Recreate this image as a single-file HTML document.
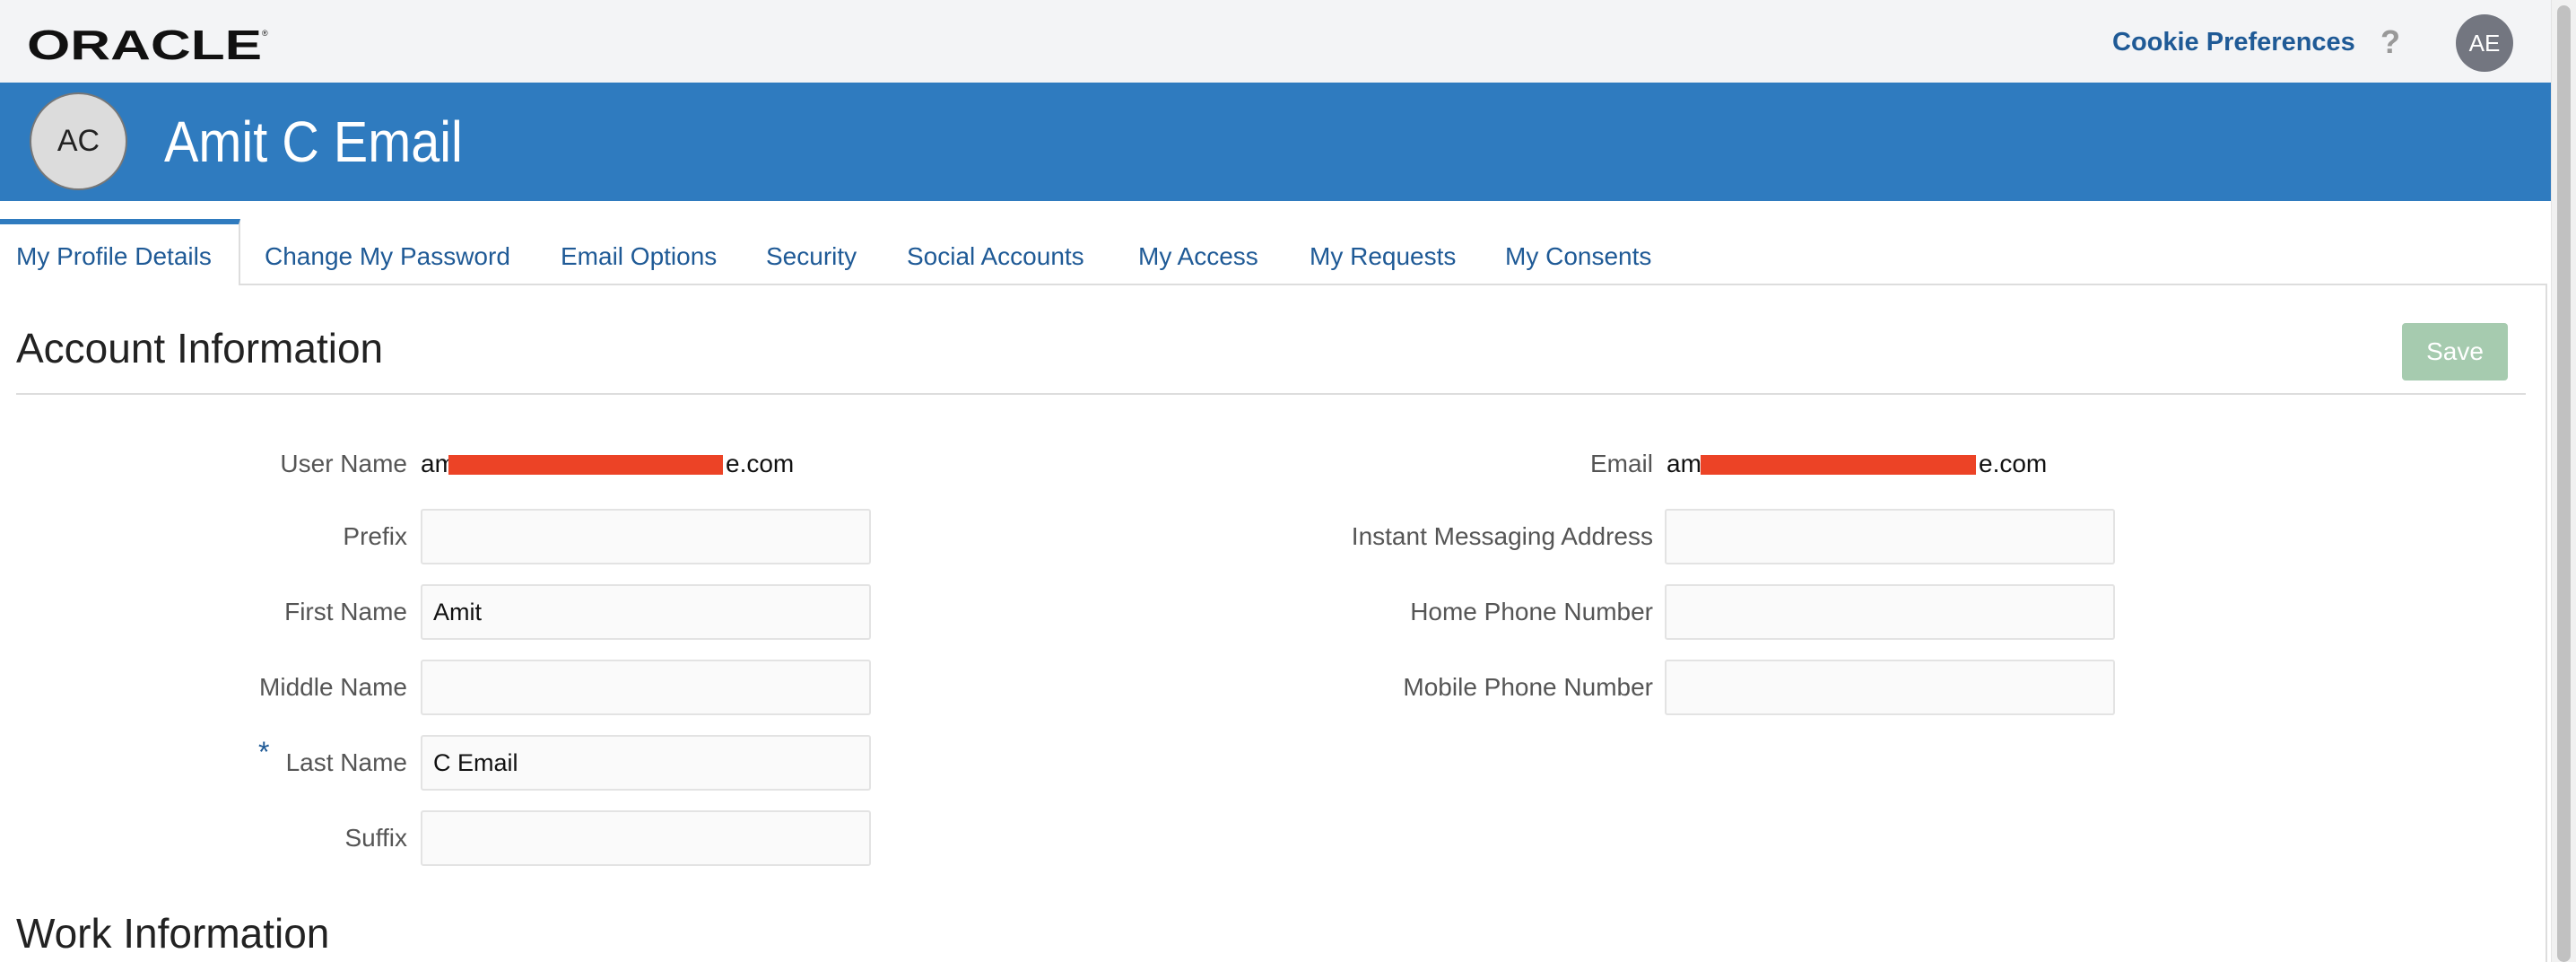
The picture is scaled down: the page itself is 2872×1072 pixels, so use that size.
<!DOCTYPE html>
<html><head><meta charset="utf-8"><style>
*{margin:0;padding:0;box-sizing:border-box}
body{width:2872px;height:1072px;overflow:hidden;background:#fff;font-family:"Liberation Sans",Arial,sans-serif;position:relative}
.a{position:absolute;white-space:nowrap}
.tab{position:absolute;top:268px;font-size:28px;color:#1f5a96;line-height:36px}
.lbl{position:absolute;font-size:28px;color:#555;text-align:right;line-height:62px}
.inp{position:absolute;width:502px;height:62px;background:#fafafa;border:2px solid #e3e3e3;border-radius:3px;font-size:27px;color:#111;line-height:58px;padding-left:12px}
.val{position:absolute;font-size:28px;line-height:62px;color:#111;white-space:nowrap}
</style></head><body>
<div class="a" style="left:0;top:0;width:2844px;height:92px;background:#f3f4f6"></div>
<svg class="a" style="left:30px;top:28px" width="272" height="42"><text x="0" y="38" textLength="262" lengthAdjust="spacingAndGlyphs" font-family="Liberation Sans" font-weight="bold" font-size="46" fill="#111">ORACLE</text><text x="262" y="12" font-size="9" fill="#111">®</text></svg>
<div class="a" style="left:2355px;top:31px;font-size:29px;font-weight:bold;color:#1f5a96">Cookie Preferences</div>
<div class="a" style="left:2654px;top:26px;font-size:36px;font-weight:bold;color:#999">?</div>
<div class="a" style="left:2738px;top:16px;width:64px;height:64px;border-radius:50%;background:#737680;color:#fff;font-size:26px;text-align:center;line-height:64px">AE</div>
<div class="a" style="left:0;top:92px;width:2844px;height:132px;background:#2f7bbf"></div>
<div class="a" style="left:33px;top:103px;width:109px;height:109px;border-radius:50%;background:#dcdcdc;border:2px solid #777;color:#222;font-size:34px;text-align:center;line-height:105px">AC</div>
<div class="a" style="left:183px;top:118px;font-size:64px;color:#fff;line-height:80px;transform:scaleX(0.9);transform-origin:0 0">Amit C Email</div>
<div class="a" style="left:2844px;top:0;width:28px;height:1072px;background:#f1f1f1;border-left:1px solid #e4e4e4"></div>
<div class="a" style="left:2851px;top:6px;width:15px;height:1066px;background:#c1c1c1;border-radius:8px"></div>
<!-- tabs -->
<div class="a" style="left:267px;top:316px;width:2573px;height:2px;background:#ddd"></div>
<div class="a" style="left:2838px;top:316px;width:2px;height:756px;background:#ddd"></div>
<div class="a" style="left:0;top:244px;width:268px;height:74px;border-top:6px solid #2f7bbf;border-right:2px solid #ddd;background:#fff"></div>
<div class="tab" style="left:18px">My Profile Details</div>
<div class="tab" style="left:295px">Change My Password</div>
<div class="tab" style="left:625px">Email Options</div>
<div class="tab" style="left:854px">Security</div>
<div class="tab" style="left:1011px">Social Accounts</div>
<div class="tab" style="left:1269px">My Access</div>
<div class="tab" style="left:1460px">My Requests</div>
<div class="tab" style="left:1678px">My Consents</div>
<div class="a" style="left:18px;top:360px;font-size:46px;color:#222;line-height:56px">Account Information</div>
<div class="a" style="left:2678px;top:360px;width:118px;height:64px;background:#a6cbaf;border-radius:4px;color:#fff;font-size:28px;text-align:center;line-height:64px">Save</div>
<div class="a" style="left:18px;top:438px;width:2798px;height:2px;background:#ddd"></div>
<!-- left column -->
<div class="lbl" style="left:0;width:454px;top:486px">User Name</div>
<div class="val" style="left:469px;top:486px">am</div>
<div class="a" style="left:500px;top:507px;width:306px;height:22px;background:#ec4326"></div>
<div class="val" style="left:809px;top:486px">e.com</div>
<div class="lbl" style="left:0;width:454px;top:567px">Prefix</div><div class="inp" style="left:469px;top:567px"></div>
<div class="lbl" style="left:0;width:454px;top:651px">First Name</div><div class="inp" style="left:469px;top:651px">Amit</div>
<div class="lbl" style="left:0;width:454px;top:735px">Middle Name</div><div class="inp" style="left:469px;top:735px"></div>
<div class="a" style="left:288px;top:820px;font-size:32px;color:#1f5a96">*</div>
<div class="lbl" style="left:0;width:454px;top:819px">Last Name</div><div class="inp" style="left:469px;top:819px">C Email</div>
<div class="lbl" style="left:0;width:454px;top:903px">Suffix</div><div class="inp" style="left:469px;top:903px"></div>
<!-- right column -->
<div class="lbl" style="left:1000px;width:843px;top:486px">Email</div>
<div class="val" style="left:1858px;top:486px">am</div>
<div class="a" style="left:1896px;top:507px;width:307px;height:22px;background:#ec4326"></div>
<div class="val" style="left:2206px;top:486px">e.com</div>
<div class="lbl" style="left:1000px;width:843px;top:567px">Instant Messaging Address</div><div class="inp" style="left:1856px;top:567px"></div>
<div class="lbl" style="left:1000px;width:843px;top:651px">Home Phone Number</div><div class="inp" style="left:1856px;top:651px"></div>
<div class="lbl" style="left:1000px;width:843px;top:735px">Mobile Phone Number</div><div class="inp" style="left:1856px;top:735px"></div>
<div class="a" style="left:18px;top:1012px;font-size:46px;color:#222;line-height:56px">Work Information</div>
</body></html>
